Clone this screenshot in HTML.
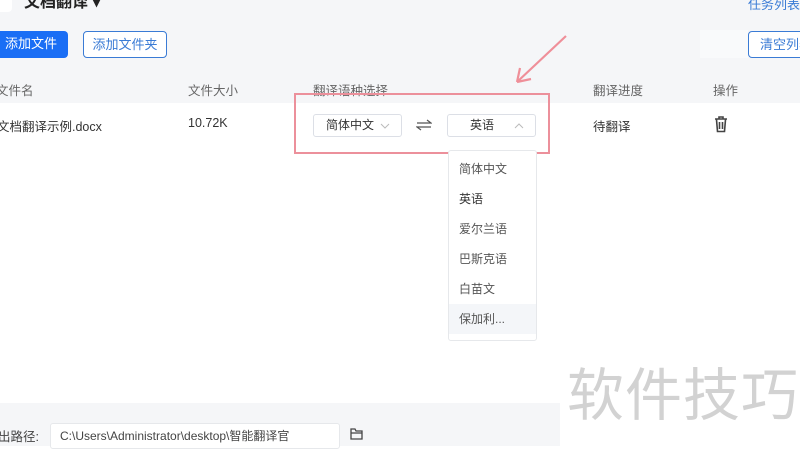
<!DOCTYPE html>
<html><head><meta charset="utf-8"><style>
*{margin:0;padding:0;box-sizing:border-box}
body{width:800px;height:446px;overflow:hidden;position:relative;background:#fff;font-family:"Liberation Sans","Noto Sans CJK SC",sans-serif;color:#333;font-size:12px}
.a{position:absolute;white-space:nowrap}
.btn{position:absolute;border-radius:4px;font-size:13px;text-align:center;line-height:25px;white-space:nowrap;overflow:hidden}
.sel{position:absolute;border:1px solid #dcdfe6;border-radius:3px;background:#fff;height:23px;line-height:21px;font-size:12px}
.dd div{height:30px;line-height:30px;padding-left:10px;font-size:12px;color:#555}
</style></head><body>
<div class="a" style="left:0;top:0;width:800px;height:74px;background:#f5f6f8"></div>
<div class="a" style="left:-10px;top:0;width:22px;height:12px;background:#fff;border-radius:0 0 4px 4px"></div>
<div class="a" style="left:24px;top:-12px;font-size:16px;font-weight:bold;color:#222">文档翻译 ▾</div>
<div class="a" style="left:748px;top:-6px;font-size:13px;color:#3a7bd5">任务列表</div>
<div class="btn" style="left:-6px;top:31px;width:74px;height:27px;background:#1a6ef5;color:#fff">添加文件</div>
<div class="btn" style="left:83px;top:31px;width:84px;height:27px;border:1px solid #3a7bd5;color:#3a7bd5;background:#fff">添加文件夹</div>
<div class="a" style="left:700px;top:30px;width:48px;height:28px;background:#f9fafb"></div>
<div class="btn" style="left:748px;top:31px;width:60px;height:27px;border:1px solid #3a7bd5;color:#3a7bd5;background:#fff;text-align:left;padding-left:11px">清空列表</div>
<div class="a" style="left:0;top:74px;width:800px;height:29px;background:#f5f6f8"></div>
<div class="a" style="left:-4px;top:80px;color:#666;font-size:12.5px">文件名</div>
<div class="a" style="left:188px;top:80px;color:#666;font-size:12.5px">文件大小</div>
<div class="a" style="left:313px;top:80px;color:#666;font-size:12.5px">翻译语种选择</div>
<div class="a" style="left:593px;top:80px;color:#666;font-size:12.5px">翻译进度</div>
<div class="a" style="left:713px;top:80px;color:#666;font-size:12.5px">操作</div>
<div class="a" style="left:-3px;top:116px;font-size:12.5px">文档翻译示例.docx</div>
<div class="a" style="left:188px;top:116px;font-size:12.5px">10.72K</div>
<div class="sel" style="left:313px;top:114px;width:89px;padding-left:12px">简体中文<svg style="position:absolute;right:11px;top:8px" width="10" height="6"><path d="M1 1l4 4 4-4" stroke="#bbb" fill="none"/></svg></div>
<svg class="a" style="left:416px;top:119px" width="16" height="12"><path d="M1 4h14l-4-3M15 8H1l4 3" stroke="#555" stroke-width="1.2" fill="none"/></svg>
<div class="sel" style="left:447px;top:114px;width:89px;padding-left:22px">英语<svg style="position:absolute;right:11px;top:8px" width="10" height="6"><path d="M1 5l4-4 4 4" stroke="#bbb" fill="none"/></svg></div>
<div class="a" style="left:593px;top:116px;font-size:12.5px">待翻译</div>
<svg class="a" style="left:713px;top:116px" width="16" height="17" viewBox="0 0 16 17"><path d="M2 3h12M6 3V1h4v2M3.5 3.5l1 12h7l1-12M6.5 6v7M9.5 6v7" stroke="#444" stroke-width="1.6" fill="none"/></svg>
<div class="a" style="left:294px;top:93px;width:256px;height:61px;border:2px solid #ec909b"></div>
<svg class="a" style="left:505px;top:30px" width="70" height="60"><path d="M61 6L12 52M12 52l3-14M12 52l14-3" stroke="#ef8f99" stroke-width="2.2" fill="none"/></svg>
<div class="a dd" style="left:448px;top:150px;width:89px;height:191px;border:1px solid #e6e8eb;border-radius:3px;background:#fff;padding-top:3px">
<div>简体中文</div><div style="color:#333">英语</div><div>爱尔兰语</div><div>巴斯克语</div><div>白苗文</div><div style="background:#f4f6f9">保加利...</div></div>
<div class="a" style="left:0;top:403px;width:560px;height:43px;background:#f5f6f8"></div>
<div class="a" style="left:-2px;top:426px;font-size:12.5px;color:#444">出路径:</div>
<div class="a" style="left:50px;top:423px;width:290px;height:26px;background:#fff;border:1px solid #e6e8eb;border-radius:3px;padding-left:9px;line-height:24px;font-size:12px;color:#444">C:\Users\Administrator\desktop\智能翻译官</div>
<svg class="a" style="left:350px;top:428px" width="14" height="12"><path d="M1 1h4l1 2h6v8H1zM1 5h11" stroke="#444" stroke-width="1.3" fill="none"/></svg>
<div class="a" style="left:567px;top:350px;font-size:57px;color:#d2d2d2;letter-spacing:1px">软件技巧</div>
</body></html>
